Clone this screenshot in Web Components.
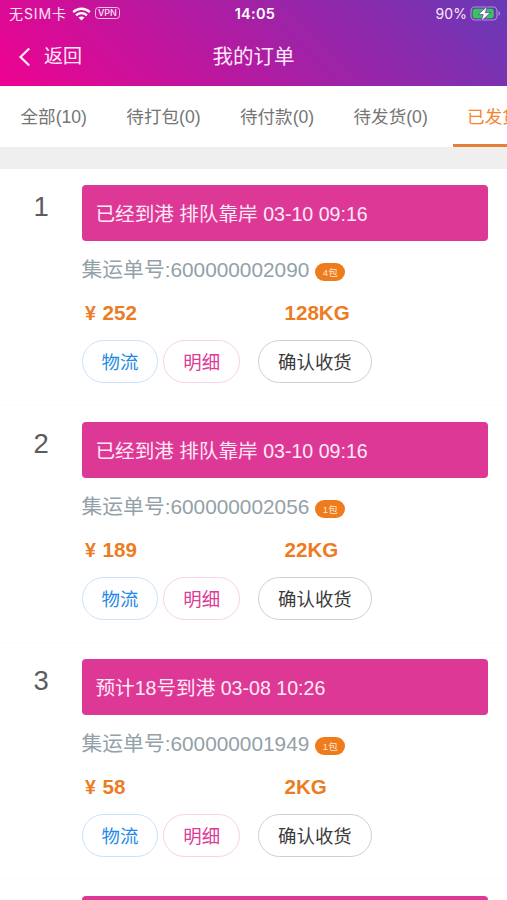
<!DOCTYPE html>
<html lang="zh-CN">
<head>
<meta charset="utf-8">
<meta name="viewport" content="width=device-width, initial-scale=1">
<title>我的订单</title>
<style>
  html, body { height: 100%; }
  body {
    margin: 0;
    overflow: hidden;
    background: #fff;
    font-family: "Liberation Sans", "Noto Sans CJK SC", sans-serif;
  }
</style>
</head>
<body>
<orders-page></orders-page>

<script>
// <status-bar>: barra del sistema (operador, hora, batería)
class StatusBar extends HTMLElement {
  constructor() {
    super();
    this.attachShadow({ mode: 'open' });
    this.shadowRoot.innerHTML = `
      <style>
        :host {
          display: grid;
          grid-template-columns: 1fr auto 1fr;
          align-items: center;
          height: 27px;
          padding: 0 6px 0 9px;
          color: #fbe6f7;
          font-family: Inter, "Noto Sans CJK SC", sans-serif;
          font-size: 14px;
          line-height: 20px;
        }
        .left, .right { display: flex; align-items: center; }
        .right { justify-content: flex-end; letter-spacing: 0.1px; }
        .sim { letter-spacing: 0.9px; white-space: pre; }
        .time { font-weight: 600; font-size: 14.5px; letter-spacing: 0.3px; color: #fff; }
        .wifi { margin-left: 5px; }
        .vpn {
          box-sizing: border-box;
          width: 25px;
          height: 12px;
          margin: -1px 0 0 4px;
          border: 1px solid #f3c3e6;
          border-radius: 3.5px;
          font-size: 9px;
          font-weight: 500;
          line-height: 10px;
          text-align: center;
        }
        .battery { margin-left: 3px; }
        svg { display: block; }
      </style>
      <div class="left">
        <span class="sim">无SIM卡</span>
        <svg class="wifi" width="19" height="14" viewBox="0 0 19 14" fill="none" stroke="#fff" stroke-width="2.3">
          <path d="M1.2 5.2C6 .6 13 .6 17.8 5.2"/>
          <path d="M4.1 8.3c3.1-2.9 7.7-2.9 10.8 0"/>
          <path d="M6.5 10.5c1.8-1.5 4.2-1.5 6 0l-3 3z" fill="#fff" stroke="none"/>
        </svg>
        <span class="vpn">VPN</span>
      </div>
      <div class="time">14:05</div>
      <div class="right">
        <span>90%</span>
        <svg class="battery" width="31" height="16" viewBox="0 0 31 16">
          <rect x="1" y="1" width="26" height="13" rx="4" fill="none" stroke="#a995d6" stroke-width="1.1"/>
          <path d="M28.500 5.200c2 .7 2 3.900 0 4.600z" fill="#a995d6"/>
          <rect x="2.700" y="2.700" width="21" height="9.600" rx="2.300" fill="#32c75a"/>
          <path d="M17.300 .2L8 8.600h5.200L11 15.300l9.600-8.600h-5.200z" fill="#fff" stroke="#6b3ab3" stroke-width=".8"/>
        </svg>
      </div>
    `;
  }
}

// <nav-header>: volver a la izquierda, título centrado
class NavHeader extends HTMLElement {
  constructor() {
    super();
    this.attachShadow({ mode: 'open' });
    this.shadowRoot.innerHTML = `
      <style>
        :host {
          display: grid;
          grid-template-columns: 1fr auto 1fr;
          align-items: center;
          height: 59px;
          padding: 0 18px;
          color: #ffe9fa;
          font-size: 20.5px;
          line-height: 28px;
        }
        .back { display: flex; align-items: center; font-size: 19px; }
        svg { margin-right: 12px; }
      </style>
      <div class="back">
        <svg width="14" height="20" viewBox="0 0 14 20" fill="none" stroke="currentColor" stroke-width="2.2">
          <path d="M11.200 1.500L2.500 10l8.700 8.500"/>
        </svg>
        <slot name="back"></slot>
      </div>
      <div><slot></slot></div>
    `;
  }
}

class TabItem extends HTMLElement {
  constructor() {
    super();
    this.attachShadow({ mode: 'open' });
    this.shadowRoot.innerHTML = `
      <style>
        :host {
          box-sizing: border-box;
          display: block;
          flex: none;
          height: 61px;
          padding: 0 14px;
          color: #757575;
          font-size: 17.6px;
          line-height: 62px;
          white-space: nowrap;
        }
        :host([active]) {
          color: #f5852c;
          box-shadow: inset 0 -3px #e68036;
        }
      </style>
      <slot></slot>
    `;
  }
}

class TabBar extends HTMLElement {
  constructor() {
    super();
    this.attachShadow({ mode: 'open' });
    this.shadowRoot.innerHTML = `
      <style>
        :host {
          display: flex;
          gap: 11.300px;
          padding-left: 6.500px;
          overflow: hidden;
          background: #fff;
        }
      </style>
      <slot></slot>
    `;
  }
}

// <pill-button kind="info|pink">
class PillButton extends HTMLElement {
  constructor() {
    super();
    this.attachShadow({ mode: 'open' });
    this.shadowRoot.innerHTML = `
      <style>
        :host { display: block; }
        button {
          display: block;
          box-sizing: border-box;
          height: 43px;
          margin: 0;
          padding: 1px 19px 0;
          border: 1px solid #cfcfcf;
          border-radius: 22px;
          background: #fff;
          color: #3b3b3b;
          font: inherit;
          font-size: 18.4px;
          line-height: 41px;
        }
        :host([kind="info"]) button { color: #2189e6; border-color: #cde1fc; }
        :host([kind="pink"]) button { color: #dd3b97; border-color: #f9d3e1; }
      </style>
      <button type="button"><slot></slot></button>
    `;
  }
}

class OrderItem extends HTMLElement {
  constructor() {
    super();
    this.attachShadow({ mode: 'open' });
  }

  connectedCallback() {
    const get = (name) => this.getAttribute(name) || '';
    this.shadowRoot.innerHTML = `
      <style>
        :host {
          box-sizing: border-box;
          display: grid;
          grid-template-columns: 81.500px 1fr;
          height: 237px;
          padding: 16px 19px 0 0;
          background: #fff;
          border-bottom: 1px solid #fcfcfc;
        }
        .index {
          padding: 5px 0 0 1px;
          text-align: center;
          color: #5c5c5c;
          font-size: 27.5px;
          line-height: 34px;
        }
        .status {
          height: 56px;
          padding-left: 14px;
          border-radius: 4px;
          background: #de3897;
          color: #ffeaf6;
          font-size: 19.6px;
          line-height: 59px;
          white-space: nowrap;
        }
        .number {
          display: flex;
          align-items: center;
          height: 30px;
          margin-top: 14px;
          color: #93a1a8;
          font-size: 20.8px;
          line-height: 30px;
        }
        .badge {
          width: 30px;
          height: 18px;
          margin: 3px 0 0 6px;
          border-radius: 9px;
          background: #ee7b1c;
          color: #ffe9d2;
          font-size: 9.5px;
          line-height: 19px;
          text-align: center;
        }
        .sums {
          display: grid;
          grid-template-columns: 200px 1fr;
          margin-top: 14px;
          padding-left: 3px;
          color: #ec7c22;
          font-size: 20.6px;
          font-weight: 700;
          line-height: 28px;
        }
        .price { display: flex; }
        .yen { width: 17.500px; padding-left: .5px; font-size: 19.500px; }
        .actions { display: flex; margin-top: 13px; }
        .actions pill-button:nth-child(2) { margin-left: 5px; }
        .actions pill-button:nth-child(3) { margin-left: 18px; }
      </style>
      <div class="index">${get('index')}</div>
      <div>
        <div class="status"><slot></slot></div>
        <div class="number">集运单号:${get('number')}<span class="badge">${get('packs')}包</span></div>
        <div class="sums">
          <div class="price"><span class="yen">¥</span>${get('price')}</div>
          <div>${get('weight')}KG</div>
        </div>
        <div class="actions">
          <pill-button kind="info">物流</pill-button>
          <pill-button kind="pink">明细</pill-button>
          <pill-button>确认收货</pill-button>
        </div>
      </div>
    `;
  }
}

class OrdersPage extends HTMLElement {
  constructor() {
    super();
    this.attachShadow({ mode: 'open' });
    this.shadowRoot.innerHTML = `
      <style>
        :host {
          display: flex;
          flex-direction: column;
          height: 100vh;
          overflow: hidden;
        }
        .top {
          flex: none;
          background: linear-gradient(45deg, #ee0290, #673ab7);
        }
        tab-bar { flex: none; }
        .gap { flex: none; height: 22px; background: #efefef; }
        .list { flex: 1; min-height: 0; overflow: hidden; }
        .next { height: 40px; margin: 16px 19px 0 81.500px; border-radius: 4px; background: #de3897; }
      </style>
      <div class="top">
        <status-bar></status-bar>
        <nav-header><span slot="back">返回</span>我的订单</nav-header>
      </div>
      <tab-bar>
        <tab-item>全部(10)</tab-item>
        <tab-item>待打包(0)</tab-item>
        <tab-item>待付款(0)</tab-item>
        <tab-item>待发货(0)</tab-item>
        <tab-item active>已发货</tab-item>
      </tab-bar>
      <div class="gap"></div>
      <div class="list">
        <order-item index="1" number="600000002090" packs="4" price="252" weight="128">已经到港 排队靠岸 03-10 09:16</order-item>
        <order-item index="2" number="600000002056" packs="1" price="189" weight="22">已经到港 排队靠岸 03-10 09:16</order-item>
        <order-item index="3" number="600000001949" packs="1" price="58" weight="2">预计18号到港 03-08 10:26</order-item>
        <div class="next"></div>
      </div>
    `;
  }
}

customElements.define('status-bar', StatusBar);
customElements.define('nav-header', NavHeader);
customElements.define('tab-item', TabItem);
customElements.define('tab-bar', TabBar);
customElements.define('pill-button', PillButton);
customElements.define('order-item', OrderItem);
customElements.define('orders-page', OrdersPage);
</script>
</body>
</html>
